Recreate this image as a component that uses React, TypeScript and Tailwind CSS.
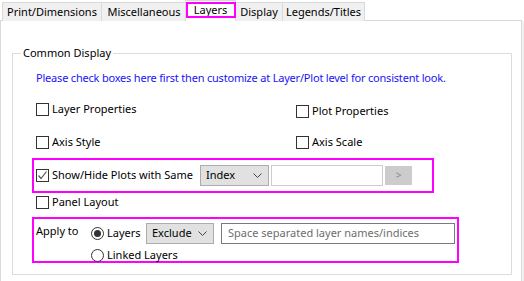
import React from "react";

const font = { fontFamily: '"Noto Sans", "Liberation Sans", sans-serif' };

function Box({ checked = false, className = "" }: { checked?: boolean; className?: string }) {
  return (
    <span className={`relative inline-block w-[13px] h-[13px] shrink-0 border border-[#333333] bg-white ${className}`}>
      {checked && (
        <svg viewBox="0 0 11 11" className="absolute inset-0 w-[11px] h-[11px]">
          <polyline points="1.5,5.5 4,8.5 9.5,1.5" fill="none" stroke="#555555" strokeWidth="1.2" />
        </svg>
      )}
    </span>
  );
}

function Radio({ on = false }: { on?: boolean }) {
  return (
    <span className="flex items-center justify-center w-[13px] h-[13px] shrink-0 rounded-full border border-[#333333] bg-white">
      {on && <span className="w-[7px] h-[7px] rounded-full bg-[#333333]" />}
    </span>
  );
}

function Check({ label, checked = false, className = "" }: { label: string; checked?: boolean; className?: string }) {
  return (
    <label className={`flex items-center h-4 gap-[3px] whitespace-nowrap ${className}`}>
      <Box checked={checked} />
      <span>{label}</span>
    </label>
  );
}

function Select({ value, w }: { value: string; w: string }) {
  return (
    <div className={`flex items-center justify-between h-[21px] ${w} shrink-0 border border-[#adadad] bg-[#e1e1e1] pl-[5px] pr-[6px]`}>
      <span>{value}</span>
      <svg viewBox="0 0 9 5" className="w-[9px] h-[5px]">
        <polyline points="0.5,0.5 4.5,4.5 8.5,0.5" fill="none" stroke="#444444" strokeWidth="1" />
      </svg>
    </div>
  );
}

const tabs = [
  { name: "Print/Dimensions", w: "w-[99px]" },
  { name: "Miscellaneous", w: "w-[85px]" },
  { name: "Layers", w: "w-[51px]", active: true },
  { name: "Display", w: "w-[47px]" },
  { name: "Legends/Titles", w: "w-[83px]" },
];

export default function App() {
  return (
    <div className="relative w-[524px] h-[281px] overflow-hidden bg-white text-[11px] text-black whitespace-nowrap" style={font}>
      {/* tab strip */}
      <div className="flex items-end h-[21px] pl-[2px] relative z-10">
        {tabs.map((t) =>
          t.active ? (
            <div key={t.name} className={`relative ${t.w} h-[21px] -mx-[1px] flex justify-center pt-[1px] bg-white border border-b-0 border-[#d9d9d9] leading-4`}>
              {t.name}
              <span className="absolute left-[0px] top-[1px] w-[50px] h-[16px] border-2 border-[#ff00ff]" />
            </div>
          ) : (
            <div key={t.name} className={`${t.w} h-[19px] flex justify-center items-center bg-[#f0f0f0] border border-r-0 last:border-r border-b-0 border-[#d9d9d9]`}>
              {t.name}
            </div>
          )
        )}
      </div>

      {/* page */}
      <div className="flex">
        <div className="-mt-[1px] w-[522px] h-[262px] border border-[#d9d9d9] bg-white pt-[32px] pl-[11px]">
          <div className="relative w-[500px] h-[222px] border border-[#dcdcdc]">
            <span className="absolute left-[8px] -top-[9px] bg-white px-[2px] leading-4">Common Display</span>

            <div className="mt-[16px] pl-[23px] h-4 leading-4 text-[#1a14f5] tracking-[-0.2px]">
              Please check boxes here first then customize at Layer/Plot level for consistent look.
            </div>

            <div className="flex mt-[15px] pl-[23px]">
              <Check label="Layer Properties" className="w-[260px]" />
              <Check label="Plot Properties" className="mt-[2px]" />
            </div>

            <div className="flex mt-[15px] pl-[23px]">
              <Check label="Axis Style" className="w-[260px]" />
              <Check label="Axis Scale" />
            </div>

            <div className="flex items-center ml-[19px] mt-[8px] w-[402px] h-[35px] border-2 border-[#ff00ff] pl-[2px]">
              <Check label="Show/Hide Plots with Same" checked className="w-[164px]" />
              <Select value="Index" w="w-[69px]" />
              <div className="ml-[2px] w-[112px] h-[21px] border border-[#cccccc] bg-white" />
              <div className="ml-[2px] w-[27px] h-[19px] flex items-center justify-center bg-[#cccccc] text-[#8a8a8a] text-[10px]">&gt;</div>
            </div>

            <div className="mt-[1px] pl-[23px]">
              <Check label="Panel Layout" />
            </div>

            <div className="flex ml-[19px] mt-[7px] w-[427px] h-[46px] border-2 border-[#ff00ff] pl-[2px]">
              <div className="w-[55px] pt-[4px] leading-4">Apply to</div>
              <div className="pt-[4px]">
                <div className="flex items-center h-[21px]">
                  <label className="flex items-center gap-[3px] w-[55px]">
                    <Radio on />
                    <span>Layers</span>
                  </label>
                  <Select value="Exclude" w="w-[68px]" />
                  <div className="ml-[7px] w-[234px] h-[21px] flex items-center border border-[#7a7a7a] bg-white pl-[6px] text-[#6d6d6d]">
                    Space separated layer names/indices
                  </div>
                </div>
                <label className="flex items-center gap-[3px] h-4 mt-[3px]">
                  <Radio />
                  <span>Linked Layers</span>
                </label>
              </div>
            </div>
          </div>
        </div>
        <div className="flex-1 bg-[#f0f0f0]" />
      </div>
    </div>
  );
}
